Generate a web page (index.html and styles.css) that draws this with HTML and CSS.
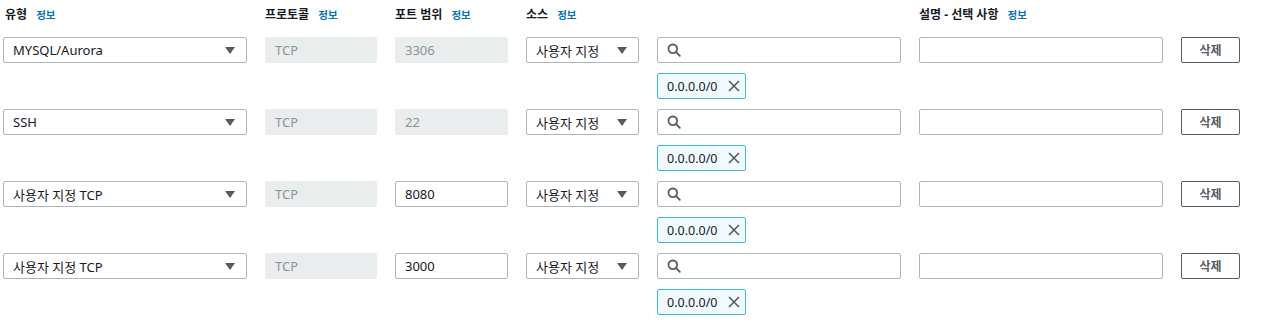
FILE: index.html
```html
<!DOCTYPE html>
<html lang="ko">
<head>
    <meta charset="UTF-8">
    <title>인바운드 규칙 편집</title>
    <link rel="stylesheet" href="styles.css">
</head>
<body>

    <!-- Header -->
    <div class="rule-grid header">
        <div class="label first">유형 <a class="info">정보</a></div>
        <div class="label">프로토콜 <a class="info">정보</a></div>
        <div class="label">포트 범위 <a class="info">정보</a></div>
        <div class="label">소스 <a class="info">정보</a></div>
        <div></div>
        <div class="label">설명 - 선택 사항 <a class="info">정보</a></div>
        <div></div>
    </div>

    <!-- Rule 1 -->
    <div class="rule-grid rule">
        <div class="select">MYSQL/Aurora<span class="caret"></span></div>
        <div class="field disabled">TCP</div>
        <div class="field disabled">3306</div>
        <div class="select">사용자 지정<span class="caret"></span></div>
        <div class="source">
            <div class="field search"><svg width="14" height="14" viewBox="0 0 14 14"><circle cx="5.8" cy="5.8" r="4.3" fill="none" stroke="#545b64" stroke-width="1.8"/><line x1="9" y1="9" x2="12.8" y2="12.8" stroke="#545b64" stroke-width="1.8" stroke-linecap="round"/></svg></div>
            <div class="chip">0.0.0.0/0 <svg width="12" height="12" viewBox="0 0 12 12"><path d="M1 1 L11 11 M11 1 L1 11" stroke="#545b64" stroke-width="1.6"/></svg></div>
        </div>
        <div class="field"></div>
        <div><button class="delete">삭제</button></div>
    </div>

    <!-- Rule 2 -->
    <div class="rule-grid rule">
        <div class="select">SSH<span class="caret"></span></div>
        <div class="field disabled">TCP</div>
        <div class="field disabled">22</div>
        <div class="select">사용자 지정<span class="caret"></span></div>
        <div class="source">
            <div class="field search"><svg width="14" height="14" viewBox="0 0 14 14"><circle cx="5.8" cy="5.8" r="4.3" fill="none" stroke="#545b64" stroke-width="1.8"/><line x1="9" y1="9" x2="12.8" y2="12.8" stroke="#545b64" stroke-width="1.8" stroke-linecap="round"/></svg></div>
            <div class="chip">0.0.0.0/0 <svg width="12" height="12" viewBox="0 0 12 12"><path d="M1 1 L11 11 M11 1 L1 11" stroke="#545b64" stroke-width="1.6"/></svg></div>
        </div>
        <div class="field"></div>
        <div><button class="delete">삭제</button></div>
    </div>

    <!-- Rule 3 -->
    <div class="rule-grid rule">
        <div class="select">사용자 지정 TCP<span class="caret"></span></div>
        <div class="field disabled">TCP</div>
        <div class="field">8080</div>
        <div class="select">사용자 지정<span class="caret"></span></div>
        <div class="source">
            <div class="field search"><svg width="14" height="14" viewBox="0 0 14 14"><circle cx="5.8" cy="5.8" r="4.3" fill="none" stroke="#545b64" stroke-width="1.8"/><line x1="9" y1="9" x2="12.8" y2="12.8" stroke="#545b64" stroke-width="1.8" stroke-linecap="round"/></svg></div>
            <div class="chip">0.0.0.0/0 <svg width="12" height="12" viewBox="0 0 12 12"><path d="M1 1 L11 11 M11 1 L1 11" stroke="#545b64" stroke-width="1.6"/></svg></div>
        </div>
        <div class="field"></div>
        <div><button class="delete">삭제</button></div>
    </div>

    <!-- Rule 4 -->
    <div class="rule-grid rule">
        <div class="select">사용자 지정 TCP<span class="caret"></span></div>
        <div class="field disabled">TCP</div>
        <div class="field">3000</div>
        <div class="select">사용자 지정<span class="caret"></span></div>
        <div class="source">
            <div class="field search"><svg width="14" height="14" viewBox="0 0 14 14"><circle cx="5.8" cy="5.8" r="4.3" fill="none" stroke="#545b64" stroke-width="1.8"/><line x1="9" y1="9" x2="12.8" y2="12.8" stroke="#545b64" stroke-width="1.8" stroke-linecap="round"/></svg></div>
            <div class="chip">0.0.0.0/0 <svg width="12" height="12" viewBox="0 0 12 12"><path d="M1 1 L11 11 M11 1 L1 11" stroke="#545b64" stroke-width="1.6"/></svg></div>
        </div>
        <div class="field"></div>
        <div><button class="delete">삭제</button></div>
    </div>

</body>
</html>
```

FILE: styles.css
```css
/* General Styles */
body {
    font-family: "Noto Sans", "Noto Sans CJK KR", sans-serif;
    font-size: 13px;
    color: #16191f;
    margin: 0;
    padding: 0 0 0 3px;
    background: white;
}

/* Grid shared by header and rules */
.rule-grid {
    display: grid;
    grid-template-columns: 244px 112px 113px 113px 244px 244px 59px;
    column-gap: 18px;
    align-items: start;
}
.header {
    height: 37px;
    align-items: center;
}
.header .label {
    font-weight: bold;
    font-size: 12px;
    margin-top: -9px;
}
.header .label.first {
    padding-left: 2px;
}
.header .info {
    color: #0073bb;
    font-size: 10.5px;
    margin-left: 6px;
}

/* Rules */
.rule {
    height: 72px;
}
.field,
.select {
    height: 26px;
    box-sizing: border-box;
    border: 1px solid #aab7b8;
    border-radius: 2px;
    display: flex;
    align-items: center;
    padding: 0 10px 0 9px;
    font-size: 13px;
}
.field.disabled {
    background-color: #eaeded;
    border-color: #eaeded;
    color: #879596;
}
.select {
    justify-content: space-between;
}
.caret {
    width: 0;
    height: 0;
    border-left: 5px solid transparent;
    border-right: 5px solid transparent;
    border-top: 7px solid #545b64;
    margin-right: 1px;
}
.search svg {
    display: block;
}
.chip {
    display: inline-flex;
    align-items: center;
    gap: 11px;
    height: 26px;
    box-sizing: border-box;
    margin-top: 10px;
    padding: 0 5px 0 9px;
    background-color: #f1faff;
    border: 1px solid #44b9d6;
    border-radius: 2px;
    font-size: 12.5px;
}
.chip svg {
    display: block;
}
.delete {
    width: 59px;
    height: 26px;
    background: white;
    border: 1px solid #545b64;
    border-radius: 2px;
    color: #545b64;
    font-family: "Noto Sans", "Noto Sans CJK KR", sans-serif;
    font-weight: bold;
    font-size: 12px;
    padding: 0;
    cursor: pointer;
}
```
